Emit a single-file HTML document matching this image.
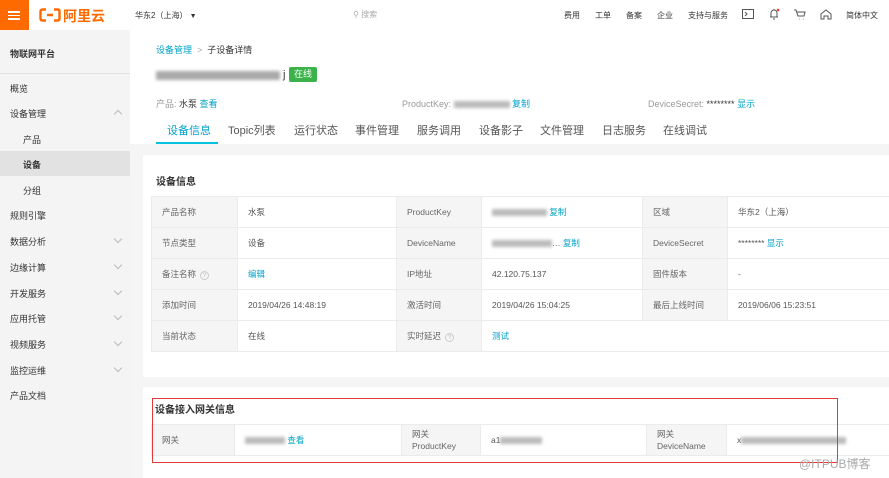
<!DOCTYPE html>
<html><head><meta charset="utf-8"><style>
*{margin:0;padding:0;box-sizing:border-box}
body{width:889px;height:478px;overflow:hidden;font-family:"Liberation Sans","Noto Sans CJK SC",sans-serif;font-size:9px;color:#333;background:#f5f5f5;position:relative}
.a{position:absolute;white-space:nowrap}
.top{position:absolute;left:0;top:0;width:889px;height:30px;background:#fff;box-shadow:0 1px 3px rgba(0,0,0,.08)}
.burger{position:absolute;left:0;top:0;width:29px;height:30px;background:#ff6a00}
.burger i{position:absolute;left:8px;width:12px;height:1.5px;background:#fff}
.side{position:absolute;left:0;top:30px;width:130px;height:448px;background:#f4f4f4}
.si{position:absolute;left:10px;font-size:9px;color:#333}
.chev{position:absolute;left:115px;width:6px;height:6px;border-right:1px solid #bbb;border-bottom:1px solid #bbb;transform:rotate(45deg)}
.hdr{position:absolute;left:130px;top:30px;width:759px;height:114px;background:#fff}
.link{color:#00a2ca}
.card{position:absolute;left:143px;background:#fff;width:746px}
table{position:absolute;border-collapse:collapse;font-size:8.5px;color:#555}
td{border:1px solid #ebebeb;height:31px;padding-left:10px}
td.l{background:#f5f5f5;color:#666}
.q{display:inline-block;width:9px;height:9px;border:1px solid #ccc;border-radius:50%;font-size:6px;text-align:center;line-height:8px;color:#bbb;margin-left:4px}
.blur{display:inline-block;height:7px;background:#bbb;filter:blur(1.5px);vertical-align:middle}
</style></head><body>
<div class="top">
<div class="burger"><i style="top:11px"></i><i style="top:14.5px"></i><i style="top:18px"></i></div>
<svg class="a" style="left:39px;top:8px" width="22" height="14" viewBox="0 0 22 14"><path d="M7 1.5H3.5Q1.5 1.5 1.5 3.5V10.5Q1.5 12.5 3.5 12.5H7M15 1.5H18.5Q20.5 1.5 20.5 3.5V10.5Q20.5 12.5 18.5 12.5H15M8 7H14" stroke="#ff6a00" stroke-width="2.4" fill="none"/></svg>
<div class="a" style="left:63px;top:6px;color:#ff6a00;font-size:14px;font-weight:bold">阿里云</div>
<div class="a" style="left:135px;top:10px;font-size:8px">华东2（上海） <span style="font-size:7px">▼</span></div>
<div class="a" style="left:353px;top:9px;font-size:8px;color:#aaa">⚲ 搜索</div>
<div class="a" style="left:564px;top:10px;font-size:8px">费用</div>
<div class="a" style="left:595px;top:10px;font-size:8px">工单</div>
<div class="a" style="left:626px;top:10px;font-size:8px">备案</div>
<div class="a" style="left:657px;top:10px;font-size:8px">企业</div>
<div class="a" style="left:688px;top:10px;font-size:8px">支持与服务</div>
<svg class="a" style="left:742px;top:9px" width="12" height="10"><rect x=".5" y=".5" width="11" height="9" fill="none" stroke="#555"/><path d="M3 3l2 2-2 2" stroke="#555" fill="none"/></svg>
<svg class="a" style="left:768px;top:8px" width="12" height="12"><path d="M2 9h8M3 9V5a3 3 0 0 1 6 0v4M5 11h2M6 1v1" stroke="#555" fill="none"/><circle cx="10" cy="2" r="1.3" fill="#f33"/></svg>
<svg class="a" style="left:794px;top:9px" width="12" height="11"><path d="M0 1h2l2 6h6l1-4H3M5 10h.5M9 10h.5" stroke="#555" fill="none"/></svg>
<svg class="a" style="left:820px;top:8px" width="12" height="12"><path d="M1 6l5-4 5 4v5H8V8H4v3H1z" stroke="#555" fill="none"/></svg>
<div class="a" style="left:846px;top:10px;font-size:8px">简体中文</div>
</div>
<div class="side">
<div class="si" style="top:17px;font-weight:bold">物联网平台</div>
<div class="a" style="left:0;top:43px;width:130px;height:1px;background:#e2e2e2"></div>
<div class="si" style="top:52px">概览</div>
<div class="si" style="top:77px">设备管理</div><div class="chev" style="top:81px;transform:rotate(225deg)"></div>
<div class="si" style="left:23px;top:103px">产品</div>
<div class="a" style="left:0;top:121px;width:130px;height:25px;background:#e2e2e2"></div>
<div class="si" style="left:23px;top:128px;font-weight:bold">设备</div>
<div class="si" style="left:23px;top:154px">分组</div>
<div class="si" style="top:179px">规则引擎</div>
<div class="si" style="top:205px">数据分析</div><div class="chev" style="top:206px"></div>
<div class="si" style="top:231px">边缘计算</div><div class="chev" style="top:232px"></div>
<div class="si" style="top:257px">开发服务</div><div class="chev" style="top:258px"></div>
<div class="si" style="top:282px">应用托管</div><div class="chev" style="top:283px"></div>
<div class="si" style="top:308px">视频服务</div><div class="chev" style="top:309px"></div>
<div class="si" style="top:334px">监控运维</div><div class="chev" style="top:335px"></div>
<div class="si" style="top:359px">产品文档</div>
</div>
<div class="hdr"></div>
<div class="a" style="left:156px;top:43px;font-size:9px"><span class="link">设备管理</span> <span style="color:#aaa">&nbsp;&gt;&nbsp;</span> 子设备详情</div>
<div class="a" style="left:156px;top:69px;font-size:11px"><span class="blur" style="width:124px;height:9px;background:#aaa"></span> j</div>
<div class="a" style="left:289px;top:67px;width:28px;height:15px;background:#3cb34a;color:#fff;border-radius:2px;text-align:center;line-height:15px;font-size:9px">在线</div>
<div class="a" style="left:156px;top:97px;color:#999">产品: <span style="color:#333">水泵</span> <span class="link">查看</span></div>
<div class="a" style="left:402px;top:97px;color:#999">ProductKey: <span class="blur" style="width:56px"></span> <span class="link">复制</span></div>
<div class="a" style="left:648px;top:97px;color:#999">DeviceSecret: <span style="color:#333">********</span> <span class="link">显示</span></div>
<div class="a" style="left:167px;top:122px;font-size:11px;color:#00a2ca">设备信息</div>
<div class="a" style="left:156px;top:142px;width:62px;height:2px;background:#00c1de"></div>
<div class="a" style="left:228px;top:122px;font-size:11px;color:#555">Topic列表</div>
<div class="a" style="left:294px;top:122px;font-size:11px;color:#555">运行状态</div>
<div class="a" style="left:355px;top:122px;font-size:11px;color:#555">事件管理</div>
<div class="a" style="left:417px;top:122px;font-size:11px;color:#555">服务调用</div>
<div class="a" style="left:479px;top:122px;font-size:11px;color:#555">设备影子</div>
<div class="a" style="left:540px;top:122px;font-size:11px;color:#555">文件管理</div>
<div class="a" style="left:602px;top:122px;font-size:11px;color:#555">日志服务</div>
<div class="a" style="left:663px;top:122px;font-size:11px;color:#555">在线调试</div>

<div class="card" style="top:155px;height:222px"></div>
<div class="a" style="left:156px;top:173px;font-size:10px;font-weight:bold">设备信息</div>
<table style="left:151px;top:196px;width:745px">
<tr><td class="l" style="width:86px">产品名称</td><td style="width:159px">水泵</td><td class="l" style="width:85px">ProductKey</td><td style="width:161px"><span class="blur" style="width:55px"></span> <span class="link">复制</span></td><td class="l" style="width:85px">区域</td><td>华东2（上海）</td></tr>
<tr><td class="l">节点类型</td><td>设备</td><td class="l">DeviceName</td><td><span class="blur" style="width:60px"></span>… <span class="link">复制</span></td><td class="l">DeviceSecret</td><td>******** <span class="link">显示</span></td></tr>
<tr><td class="l">备注名称<span class="q">?</span></td><td class="link">编辑</td><td class="l">IP地址</td><td>42.120.75.137</td><td class="l">固件版本</td><td>-</td></tr>
<tr><td class="l">添加时间</td><td>2019/04/26 14:48:19</td><td class="l">激活时间</td><td>2019/04/26 15:04:25</td><td class="l">最后上线时间</td><td>2019/06/06 15:23:51</td></tr>
<tr><td class="l">当前状态</td><td>在线</td><td class="l">实时延迟<span class="q">?</span></td><td class="link" colspan="3">测试</td></tr>
</table>

<div class="card" style="top:387px;height:91px"></div>
<div class="a" style="left:155px;top:401px;font-size:10px;font-weight:bold">设备接入网关信息</div>
<table style="left:151px;top:424px;width:745px">
<tr><td class="l" style="width:83px">网关</td><td style="width:167px"><span class="blur" style="width:40px"></span> <span class="link">查看</span></td><td class="l" style="width:79px;line-height:12px">网关<br>ProductKey</td><td style="width:166px">a1<span class="blur" style="width:42px"></span></td><td class="l" style="width:80px;line-height:12px">网关<br>DeviceName</td><td>x<span class="blur" style="width:105px"></span></td></tr>
</table>
<div class="a" style="left:152px;top:398px;width:686px;height:65px;border:1.5px solid #e53935"></div>
<div class="a" style="left:799px;top:455px;font-size:12px;color:#aaa">@ITPUB博客</div>
</body></html>
